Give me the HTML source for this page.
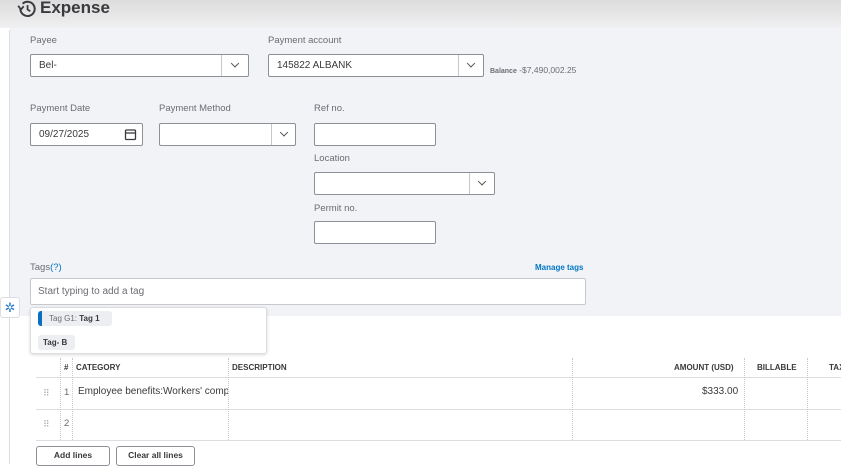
<!DOCTYPE html>
<html><head><style>
*{box-sizing:border-box;margin:0;padding:0}
body{width:841px;height:464px;overflow:hidden;background:#fff;font-family:"Liberation Sans",sans-serif;position:relative;color:#393a3d}
.a{position:absolute}
.hdr{left:0;top:0;width:841px;height:28px;background:linear-gradient(#dcdcdc,#f0f0f2)}
.grey{left:10px;top:28px;width:831px;height:288px;background:#f2f3f7}
.lbl{font-size:9.5px;color:#6b6c72}
.in{background:#fff;border:1px solid #8d9096;border-radius:2px;font-size:10px;color:#393a3d;padding-left:8px;line-height:21px}
.dd{position:absolute;top:0;right:0;height:100%;border-left:1px solid #c7c8cc}
.dd:after{content:"";position:absolute;left:50%;top:45%;width:5px;height:5px;border-right:1.2px solid #555;border-bottom:1.2px solid #555;transform:translate(-50%,-60%) rotate(45deg)}
.th{font-size:8px;font-weight:bold;color:#393a3d;top:363px}
.hl{height:1px;background:#dcdde1;left:36px;width:805px}
.vl{width:0;border-left:1px dotted #c8c9cd;top:358px;height:82px}
.btn{border:1px solid #8d9096;border-radius:3px;font-size:8.5px;font-weight:bold;text-align:center;line-height:17px;background:#fff;top:446px;height:20px}
</style></head><body>
<div class="a hdr"></div>
<svg class="a" style="left:16px;top:-1px" width="22" height="20" viewBox="0 0 20 18"><path d="M4 9 A6.5 6.5 0 1 0 6 4.2" fill="none" stroke="#393a3d" stroke-width="1.8"/><path d="M2 6 L4.5 9.5 L7 6.5" fill="none" stroke="#393a3d" stroke-width="1.6"/><path d="M10.5 5.5 V9.5 L13 11" fill="none" stroke="#393a3d" stroke-width="1.6"/></svg>
<div class="a" style="left:40px;top:-2px;font-size:17px;font-weight:bold;color:#393a3d">Expense</div>
<div class="a" style="left:0;top:30px;width:10px;height:434px;border-right:1px solid #dcdde1;background:#fff"></div>
<div class="a grey"></div>

<div class="a lbl" style="left:30px;top:35px">Payee</div>
<div class="a in" style="left:30px;top:54px;width:219px;height:23px">Bel-<div class="dd" style="width:27px"></div></div>
<div class="a lbl" style="left:268px;top:35px">Payment account</div>
<div class="a in" style="left:268px;top:54px;width:216px;height:23px">145822 ALBANK<div class="dd" style="width:25px"></div></div>
<div class="a" style="left:490px;top:65px;font-size:8.5px;color:#6b6c72"><span style="font-size:7px;font-weight:bold">Balance</span> -$7,490,002.25</div>

<div class="a lbl" style="left:30px;top:103px">Payment Date</div>
<div class="a in" style="left:30px;top:123px;width:113px;height:23px">09/27/2025</div>
<svg class="a" style="left:124px;top:128px" width="13" height="13" viewBox="0 0 13 13"><rect x="1.5" y="2" width="10" height="9.5" rx="1" fill="none" stroke="#393a3d" stroke-width="1.3"/><line x1="1.5" y1="5" x2="11.5" y2="5" stroke="#393a3d" stroke-width="1.3"/></svg>
<div class="a lbl" style="left:159px;top:103px">Payment Method</div>
<div class="a in" style="left:159px;top:123px;width:137px;height:23px"><div class="dd" style="width:24px"></div></div>
<div class="a lbl" style="left:314px;top:103px">Ref no.</div>
<div class="a in" style="left:314px;top:123px;width:122px;height:23px"></div>
<div class="a lbl" style="left:314px;top:153px">Location</div>
<div class="a in" style="left:314px;top:172px;width:181px;height:23px"><div class="dd" style="width:25px"></div></div>
<div class="a lbl" style="left:314px;top:203px">Permit no.</div>
<div class="a in" style="left:314px;top:221px;width:122px;height:23px"></div>

<div class="a lbl" style="left:30px;top:262px">Tags<span style="color:#0077c5">(?)</span></div>
<div class="a" style="left:535px;top:263px;font-size:8px;font-weight:bold;color:#0077c5">Manage tags</div>
<div class="a in" style="left:30px;top:278px;width:556px;height:27px;border-color:#c7c8cc;line-height:25px;color:#6b6c72;padding-left:7px">Start typing to add a tag</div>

<div class="a" style="left:0;top:297px;width:20px;height:21px;background:#fff;border:1px solid #dcdde1;border-radius:3px;color:#2f7dd1;font-size:13px;text-align:center;line-height:19px">✲</div>

<div class="a" style="left:30px;top:307px;width:237px;height:47px;background:#fff;border:1px solid #dcdde1;border-radius:3px;box-shadow:0 1px 3px rgba(0,0,0,.15)"></div>
<div class="a" style="left:38px;top:311px;width:74px;height:15px;background:#eceef1;border-radius:3px;font-size:8px;line-height:15px;padding-left:11px;color:#6b6c72">Tag G1: <b style="color:#393a3d">Tag 1</b></div>
<div class="a" style="left:38px;top:311px;width:4px;height:15px;background:#0a6fc2;border-radius:3px 0 0 3px"></div>
<div class="a" style="left:38px;top:335px;width:37px;height:15px;background:#eceef1;border-radius:3px;font-size:8px;line-height:15px;padding-left:5px;font-weight:bold">Tag- B</div>

<div class="a hl" style="top:377px"></div>
<div class="a hl" style="top:409px"></div>
<div class="a hl" style="top:440px"></div>
<div class="a vl" style="left:60px"></div>
<div class="a vl" style="left:72px"></div>
<div class="a vl" style="left:228px"></div>
<div class="a vl" style="left:572px"></div>
<div class="a vl" style="left:744px"></div>
<div class="a vl" style="left:807px"></div>
<div class="a th" style="left:64px">#</div>
<div class="a th" style="left:76px">CATEGORY</div>
<div class="a th" style="left:232px">DESCRIPTION</div>
<div class="a th" style="left:674px">AMOUNT (USD)</div>
<div class="a th" style="left:757px">BILLABLE</div>
<div class="a th" style="left:829px">TAX</div>
<div class="a" style="left:43px;top:388px;font-size:9px;color:#aaa">⠿</div>
<div class="a" style="left:64px;top:387px;font-size:9.5px;color:#6b6c72">1</div>
<div class="a" style="left:78px;top:386px;width:150px;overflow:hidden;white-space:nowrap;font-size:10px;color:#393a3d">Employee benefits:Workers' comp</div>
<div class="a" style="left:702px;top:386px;font-size:10px;color:#393a3d">$333.00</div>
<div class="a" style="left:43px;top:419px;font-size:9px;color:#aaa">⠿</div>
<div class="a" style="left:64px;top:418px;font-size:9.5px;color:#6b6c72">2</div>

<div class="a btn" style="left:36px;width:74px">Add lines</div>
<div class="a btn" style="left:116px;width:79px">Clear all lines</div>
</body></html>
